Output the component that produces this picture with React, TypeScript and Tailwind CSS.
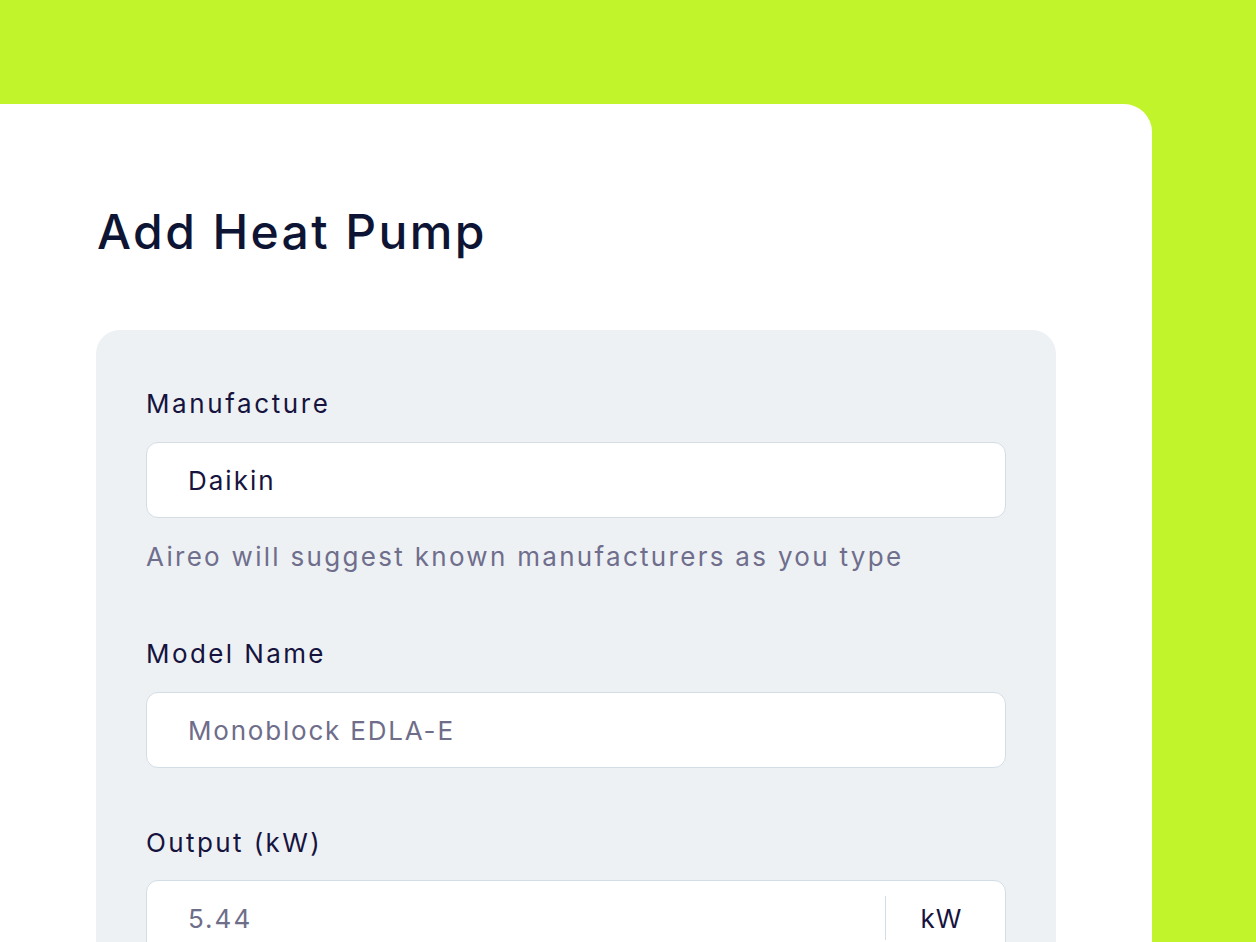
export default function App() {
  return (
    <div
      className="h-[942px] w-[1256px] overflow-hidden bg-[#c1f42b] pt-[104px]"
      style={{ fontFamily: "Inter, 'Noto Sans', sans-serif" }}
    >
      <div className="h-[900px] w-[1152px] rounded-tr-[28px] bg-white pl-[96px] pt-[96px]">
        <h1 className="pl-[1px] text-[48px] font-medium leading-[64px] tracking-[2.4px] text-[#0e1534]">
          Add Heat Pump
        </h1>
        <div className="mt-[66px] h-[700px] w-[960px] rounded-t-[24px] bg-[#edf1f4] px-[50px] pt-[56px]">
          <label className="block text-[26px] leading-[36px] tracking-[2.6px] text-[#16143e]">Manufacture</label>
          <div className="mt-[20px] flex h-[76px] items-center rounded-[12px] border border-[#d3dde6] bg-white px-[41px] text-[26px] tracking-[2px] text-[#16143e]">
            Daikin
          </div>
          <p className="mt-[21px] text-[26px] leading-[36px] tracking-[2.3px] text-[#6f6e8c]">
            Aireo will suggest known manufacturers as you type
          </p>

          <label className="mt-[61px] block text-[26px] leading-[36px] tracking-[2.4px] text-[#16143e]">Model Name</label>
          <div className="mt-[20px] flex h-[76px] items-center rounded-[12px] border border-[#d3dde6] bg-white px-[41px] text-[26px] tracking-[1.8px] text-[#6e6d8a]">
            Monoblock EDLA-E
          </div>

          <label className="mt-[57px] block text-[26px] leading-[36px] tracking-[2.4px] text-[#16143e]">Output (kW)</label>
          <div className="mt-[19px] flex h-[76px] items-stretch rounded-[12px] border border-[#d3dde6] bg-white">
            <div className="flex flex-1 items-center px-[41px] text-[26px] tracking-[2px] text-[#6e6d8a]">5.44</div>
            <div className="my-[15px] w-px bg-[#d3dde6]" />
            <div className="flex w-[119px] items-center justify-center pr-[8px] text-[26px] tracking-[1px] text-[#16143e]">kW</div>
          </div>
        </div>
      </div>
    </div>
  );
}
